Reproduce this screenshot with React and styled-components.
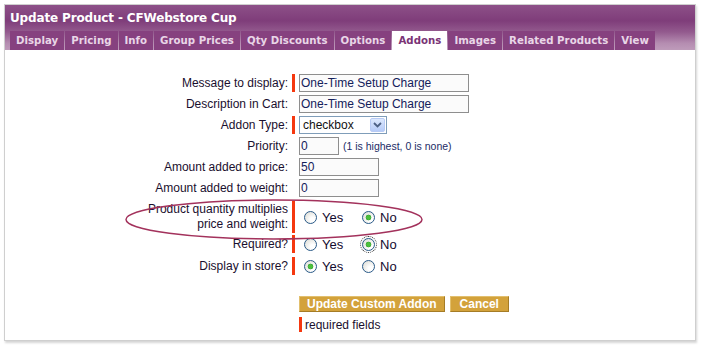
import styled, { createGlobalStyle } from "styled-components";

const Global = createGlobalStyle`
  html, body { margin: 0; padding: 0; background: #fff; }
  body { font-family: "Liberation Sans", Arial, sans-serif; }
`;

const tabs = [
  "Display",
  "Pricing",
  "Info",
  "Group Prices",
  "Qty Discounts",
  "Options",
  "Addons",
  "Images",
  "Related Products",
  "View",
];

const Page = styled.div`
  width: 704px;
  height: 347px;
  padding: 4px 0 0 4px;
  box-sizing: border-box;
`;

const Panel = styled.div`
  width: 692px;
  height: 337px;
  box-sizing: border-box;
  border: 1px solid #cfcfcf;
  box-shadow: 1px 2px 2px #d6d6d6;
  background: #fff;
  position: relative;
`;

const Header = styled.div`
  background: linear-gradient(#8d5088 0%, #7f3d7a 35%, #935a8e 60%, #b58db1 85%, #be9bba 100%);
  padding: 0 0 0 5px;
`;

const Title = styled.div`
  height: 26px;
  line-height: 26px;
  color: #fff;
  font-family: "DejaVu Sans", Verdana, sans-serif;
  font-weight: bold;
  font-size: 12px;
  letter-spacing: -0.15px;
`;

const Tabs = styled.div`
  display: flex;
  gap: 1px;
  height: 19px;
`;

const Tab = styled.div`
  padding: 0 6px;
  line-height: 19px;
  font-family: "DejaVu Sans", Verdana, sans-serif;
  font-weight: bold;
  font-size: 10.2px;
  letter-spacing: 0.03px;
  color: ${(p) => (p.$active ? "#7a3476" : "#e9d6e7")};
  background: ${(p) => (p.$active ? "#fff" : "#86417f")};
`;

const Body = styled.div`
  padding-top: 24px;
`;

const Row = styled.div`
  display: grid;
  grid-template-columns: 283px 3px 1fr;
  column-gap: 4px;
  align-items: center;
  min-height: 18px;
  margin-bottom: ${(p) => p.$gap ?? 3}px;
`;

const Label = styled.div`
  text-align: right;
  font-size: 12px;
  line-height: 15px;
  color: #1a0f2e;
  padding: ${(p) => (p.$tall ? "1px 0" : "0")};
`;

const Marker = styled.div`
  align-self: stretch;
  background: ${(p) => (p.$on ? "#f5380f" : "transparent")};
`;

const Field = styled.div`
  display: flex;
  align-items: center;
  gap: 4px;
`;

const TextInput = styled.input`
  box-sizing: border-box;
  width: ${(p) => p.$w}px;
  height: 18px;
  border: 1px solid #8e8e8e;
  background: #fbfbfb;
  padding: 0 1px;
  font-family: "Liberation Sans", Arial, sans-serif;
  font-size: 12px;
  color: #13205a;
  outline: none;
`;

const Select = styled.div`
  box-sizing: border-box;
  width: 88px;
  height: 18px;
  border: 1px solid #7f9db9;
  background: #fff;
  display: flex;
  align-items: center;
  justify-content: space-between;
  padding: 0 1px 0 3px;
  font-size: 12px;
  color: #111;
`;

const ArrowBox = styled.span`
  width: 15px;
  height: 14px;
  box-sizing: border-box;
  border: 1px solid #b8cbf5;
  border-radius: 2px;
  background: linear-gradient(#dce8fd, #b6cbf8);
  display: flex;
  align-items: center;
  justify-content: center;
`;

const Hint = styled.span`
  font-size: 10.5px;
  color: #1c2b66;
`;

const Choice = styled.label`
  display: inline-flex;
  align-items: center;
  gap: 5px;
  font-size: 13px;
  color: #140c30;
  margin-left: 5px;
  width: 49px;
`;

const Radio = styled.input.attrs({ type: "radio", readOnly: true })`
  appearance: none;
  margin: 0;
  width: 13px;
  height: 13px;
  border-radius: 50%;
  border: 1px solid #2a5a88;
  box-sizing: border-box;
  background: ${(p) =>
    p.checked
      ? "radial-gradient(circle, #4cbf3c 0 2px, #2e9a2a 2.5px, transparent 3.2px), radial-gradient(circle at 70% 70%, #fff 20%, #d8d8d0 100%)"
      : "radial-gradient(circle at 70% 70%, #fff 20%, #d8d8d0 100%)"};
  outline: ${(p) => (p.$focus ? "1px dotted #333" : "none")};
  outline-offset: 1px;
`;

const Buttons = styled.div`
  display: flex;
  gap: 5px;
  margin-top: 18px;
`;

const Button = styled.button`
  height: 16px;
  padding: 0 ${(p) => p.$pad ?? 7}px;
  border: 1px solid;
  border-color: #e2bf6d #a57c26 #a57c26 #e2bf6d;
  background: #d3a23b;
  color: #fff;
  font-family: "Liberation Sans", Arial, sans-serif;
  font-weight: bold;
  font-size: 12px;
  line-height: 14px;
`;

const Required = styled.div`
  display: flex;
  align-items: center;
  gap: 3px;
  margin-top: 5px;
  font-size: 12px;
  color: #1a0f2e;
  &::before {
    content: "";
    width: 3px;
    height: 15px;
    background: #f5380f;
  }
`;

const Ellipse = styled.svg`
  position: absolute;
  left: 115px;
  top: 190px;
  pointer-events: none;
`;

const Chevron = () => (
  <svg width="9" height="6" viewBox="0 0 9 6">
    <path d="M1 1 L4.5 4.5 L8 1" fill="none" stroke="#4d6185" strokeWidth="1.8" />
  </svg>
);

const YesNo = ({ yes, focus }) => (
  <Field>
    <Choice>
      <Radio checked={yes} />
      Yes
    </Choice>
    <Choice>
      <Radio checked={!yes} $focus={focus} />
      No
    </Choice>
  </Field>
);

export default function App() {
  return (
    <Page>
      <Global />
      <Panel>
        <Header>
          <Title>Update Product - CFWebstore Cup</Title>
          <Tabs>
            {tabs.map((t) => (
              <Tab key={t} $active={t === "Addons"}>
                {t}
              </Tab>
            ))}
          </Tabs>
        </Header>
        <Body>
          <Row>
            <Label>Message to display:</Label>
            <Marker $on />
            <Field>
              <TextInput $w={170} defaultValue="One-Time Setup Charge" />
            </Field>
          </Row>
          <Row>
            <Label>Description in Cart:</Label>
            <Marker />
            <Field>
              <TextInput $w={170} defaultValue="One-Time Setup Charge" />
            </Field>
          </Row>
          <Row>
            <Label>Addon Type:</Label>
            <Marker $on />
            <Field>
              <Select>
                checkbox
                <ArrowBox>
                  <Chevron />
                </ArrowBox>
              </Select>
            </Field>
          </Row>
          <Row>
            <Label>Priority:</Label>
            <Marker />
            <Field>
              <TextInput $w={40} defaultValue="0" />
              <Hint>(1 is highest, 0 is none)</Hint>
            </Field>
          </Row>
          <Row>
            <Label>Amount added to price:</Label>
            <Marker />
            <Field>
              <TextInput $w={80} defaultValue="50" />
            </Field>
          </Row>
          <Row $gap={4}>
            <Label>Amount added to weight:</Label>
            <Marker />
            <Field>
              <TextInput $w={80} defaultValue="0" />
            </Field>
          </Row>
          <Row $gap={2}>
            <Label $tall>
              Product quantity multiplies
              <br />
              price and weight:
            </Label>
            <Marker $on />
            <YesNo yes={false} />
          </Row>
          <Row $gap={4}>
            <Label>Required?</Label>
            <Marker $on />
            <YesNo yes={false} focus />
          </Row>
          <Row>
            <Label>Display in store?</Label>
            <Marker $on />
            <YesNo yes />
          </Row>
          <Row>
            <span />
            <span />
            <div>
              <Buttons>
                <Button>Update Custom Addon</Button>
                <Button $pad={9}>Cancel</Button>
              </Buttons>
              <Required>required fields</Required>
            </div>
          </Row>
        </Body>
        <Ellipse width="310" height="50">
          <ellipse cx="154" cy="24.5" rx="148" ry="19.5" fill="none" stroke="#a3325c" strokeWidth="1.5" />
        </Ellipse>
      </Panel>
    </Page>
  );
}
